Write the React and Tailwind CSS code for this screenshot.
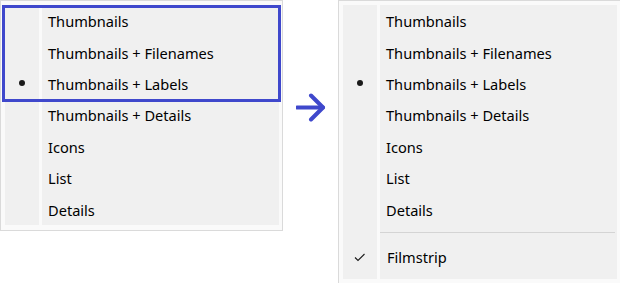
import React from 'react';

const items = [
  'Thumbnails',
  'Thumbnails + Filenames',
  'Thumbnails + Labels',
  'Thumbnails + Details',
  'Icons',
  'List',
  'Details',
];

const Bullet = () => <span className="block w-[6px] h-[6px] rounded-full bg-[#1a1a1a]" />;

const Check = () => (
  <svg width="12" height="10" viewBox="0 0 12 10" fill="none">
    <path d="M1 5.5 L4 8.5 L10.5 2" stroke="#1a1a1a" strokeWidth="1.1" />
  </svg>
);

const Row = ({ label, mark }) => (
  <div className="flex h-[31.4px] items-center">
    <div className="w-[34px] h-full flex items-center justify-center bg-[#f0f0f0]">{mark}</div>
    <div className="w-[3px] h-full bg-[#fafafa]" />
    <div className="flex-1 h-full flex items-center pt-[3px] pl-[6px] bg-[#f0f0f0] text-[14.6px] text-black">
      {label}
    </div>
  </div>
);

const Menu = ({ checked, filmstrip }) => (
  <div className="w-[283px] border border-[#dadada] bg-[#fafafa] pt-[4px] pl-[4px] pr-[3px] pb-[5px]">
    {items.map((label) => (
      <Row key={label} label={label} mark={label === checked ? <Bullet /> : null} />
    ))}
    {filmstrip && (
      <>
        <div className="flex h-[14.6px]">
          <div className="w-[34px] bg-[#f0f0f0]" />
          <div className="w-[3px] bg-[#fafafa]" />
          <div className="flex-1 flex items-center bg-[#f0f0f0] pr-[2px]">
            <div className="w-full h-px bg-[#d4d4d4]" />
          </div>
        </div>
        <div className="flex h-[40px] items-start">
          <div className="w-[34px] h-full flex items-start justify-center pt-[13px] bg-[#f0f0f0]">
            <Check />
          </div>
          <div className="w-[3px] h-full bg-[#fafafa]" />
          <div className="flex-1 h-full flex items-start pt-[8px] pl-[7px] bg-[#f0f0f0] text-[14.6px] text-black">
            Filmstrip
          </div>
        </div>
      </>
    )}
  </div>
);

const App = () => {
  return (
    <div className="w-[620px] h-[283px] bg-white flex items-start" style={{ fontFamily: '"Noto Sans", sans-serif' }}>
      <div className="relative">
        <Menu checked="Thumbnails + Labels" />
        <div className="absolute left-[2px] top-[5px] w-[279px] h-[97px] border-[3px] border-[#3f48cc]" />
      </div>
      <div className="ml-[13px] mt-[93px] w-[30px]">
        <svg width="30" height="29" viewBox="0 0 30 29" fill="none">
          <path d="M1 14.5 H27" stroke="#3f48cc" strokeWidth="4" strokeLinecap="round" />
          <path d="M15 2.5 L27 14.5 L15 26.5" stroke="#3f48cc" strokeWidth="4" strokeLinecap="round" strokeLinejoin="round" />
        </svg>
      </div>
      <div className="ml-[12px]">
        <Menu checked="Thumbnails + Labels" filmstrip />
      </div>
    </div>
  );
};

export default App;
